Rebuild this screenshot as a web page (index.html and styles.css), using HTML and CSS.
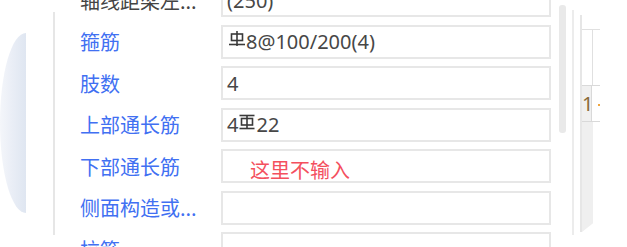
FILE: index.html
```html
<!DOCTYPE html>
<html lang="zh-CN">
<head>
<meta charset="utf-8">
<title>梁配筋属性</title>
<link rel="stylesheet" href="styles.css">
</head>
<body>
<div class="screen">
  <div class="orb"></div>
  <div class="divider"></div>
  <div class="form">
    <div class="row"><div class="label dark">轴线距梁左...</div><div class="field">(250)</div></div>
    <div class="row"><div class="label">箍筋</div><div class="field"><svg class="sym sym-up" viewBox="0 0 16 16" width="16" height="16"><rect x="2.5" y="3" width="11" height="6.5" fill="none" stroke="#3a3a3a" stroke-width="1.6"/><line x1="8" y1="0" x2="8" y2="15" stroke="#3a3a3a" stroke-width="1.6"/><line x1="0" y1="13.5" x2="16" y2="13.5" stroke="#3a3a3a" stroke-width="1.6"/></svg><span class="val">8@100/200(4)</span></div></div>
    <div class="row"><div class="label">肢数</div><div class="field">4</div></div>
    <div class="row"><div class="label">上部通长筋</div><div class="field"><span class="val">4</span><svg class="sym sym-mid" viewBox="0 0 16 16" width="16" height="16"><line x1="0.5" y1="1.5" x2="15.5" y2="1.5" stroke="#3a3a3a" stroke-width="1.6"/><rect x="2.5" y="4.5" width="11" height="6.5" fill="none" stroke="#3a3a3a" stroke-width="1.6"/><line x1="8" y1="1.5" x2="8" y2="14.5" stroke="#3a3a3a" stroke-width="1.6"/><line x1="0.5" y1="14.5" x2="15.5" y2="14.5" stroke="#3a3a3a" stroke-width="1.6"/></svg><span class="val">22</span></div></div>
    <div class="row"><div class="label">下部通长筋</div><div class="field"><span class="note">这里不输入</span></div></div>
    <div class="row"><div class="label">侧面构造或...</div><div class="field"></div></div>
    <div class="row"><div class="label">拉筋</div><div class="field"></div></div>
  </div>
  <div class="scrollbar"></div>
  <div class="sep"></div>
  <div class="panel">
    <div class="pn-gap"></div>
    <div class="pn-head"><div class="pn-col"></div></div>
    <div class="pn-row"><div class="pn-idx">1</div><span class="pn-dot"></span></div>
    <div class="pn-fill"></div>
  </div>
</div>
</body>
</html>
```
FILE: styles.css
```css
html, body {
  margin: 0;
  padding: 0;
  background: #ffffff;
}

.screen {
  width: 627px;
  height: 247px;
  overflow: hidden;
  display: flex;
  align-items: flex-start;
  background: #ffffff;
  font-family: "Noto Sans", "Noto Sans CJK SC", sans-serif;
}

.orb {
  flex: none;
  width: 26px;
  height: 180px;
  margin-top: 33px;
  border-radius: 26px 0 0 26px / 90px 0 0 90px;
  background: linear-gradient(to right, #f4f6fa 0%, #eaeef6 45%, #dfe6f1 100%);
}

.divider {
  flex: none;
  width: 2px;
  height: 223px;
  margin-left: 27px;
  margin-top: 12px;
  background: #e6e6e6;
}

.form {
  flex: none;
  margin-left: 25px;
  margin-top: -17px;
  display: flex;
  flex-direction: column;
  gap: 7.5px;
}

.row {
  display: flex;
  align-items: center;
  height: 34px;
}

.label {
  width: 141px;
  flex: none;
  font-family: "Noto Sans CJK SC", sans-serif;
  font-size: 20px;
  color: #4170f2;
  white-space: nowrap;
}

.label.dark {
  color: #444444;
}

.field {
  position: relative;
  box-sizing: border-box;
  width: 330px;
  height: 34px;
  flex: none;
  border: 2px solid #e7e7e7;
  padding-left: 4px;
  display: flex;
  align-items: center;
  font-family: "Noto Sans", sans-serif;
  font-size: 20px;
  color: #474747;
}

.sym {
  flex: none;
  display: block;
}

.sym-up {
  margin-left: 2px;
  margin-right: 1px;
  margin-top: -6px;
}

.sym-mid {
  margin-left: 1px;
  margin-right: 1px;
  margin-top: -5px;
}

.note {
  position: absolute;
  left: 27px;
  top: 9px;
  font-family: "Noto Sans CJK SC", sans-serif;
  font-size: 20px;
  line-height: 20px;
  color: #f4505e;
  white-space: nowrap;
}

.scrollbar {
  flex: none;
  width: 7px;
  height: 128px;
  margin-left: 8px;
  margin-top: 5px;
  border-radius: 3px;
  background: #e9e9e9;
}

.sep {
  flex: none;
  width: 2px;
  height: 225px;
  margin-left: 6px;
  margin-top: 10px;
  background: #ececec;
}

.panel {
  flex: none;
  width: 20px;
  height: 217px;
  margin-left: 6px;
  margin-top: 15px;
  display: flex;
  flex-direction: column;
  border-left: 2px solid #e6e6e6;
  box-sizing: border-box;
}

.pn-gap {
  height: 14px;
  flex: none;
}

.pn-head {
  height: 55px;
  flex: none;
  border-top: 1px solid #e0e0e0;
  display: flex;
}

.pn-col {
  width: 10px;
  border-right: 1px solid #e0e0e0;
}

.pn-row {
  position: relative;
  height: 35px;
  flex: none;
  border-top: 1px solid #d9d9d9;
  border-bottom: 1px solid #d9d9d9;
  display: flex;
  align-items: center;
}

.pn-idx {
  width: 10px;
  height: 100%;
  box-sizing: border-box;
  background: #f0f0f0;
  border-right: 1px solid #d9d9d9;
  font-family: "Noto Sans", sans-serif;
  font-size: 20px;
  line-height: 35px;
  color: #8a6a36;
  overflow: hidden;
}

.pn-dot {
  position: absolute;
  left: 16px;
  top: 18px;
  width: 2px;
  height: 2px;
  background: #f0a640;
}

.pn-fill {
  flex: 1;
  width: 11px;
  background: #efefef;
  clip-path: polygon(0 0, 100% 0, 100% 92%, 0 100%);
}
```
